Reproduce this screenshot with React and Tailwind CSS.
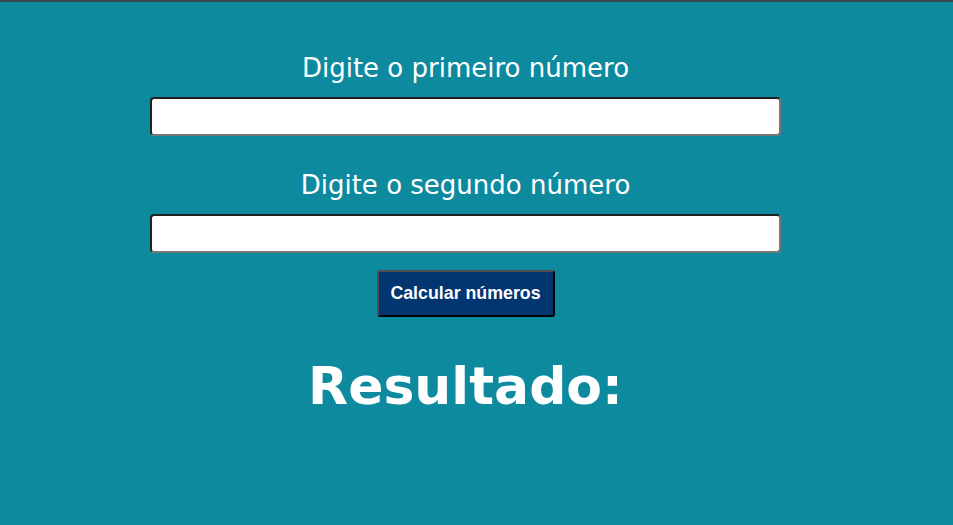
import React from 'react';

const labelCls = "block text-[26px] leading-[26px] text-white font-['DejaVu_Sans',Verdana,sans-serif]";
const inputCls = "mt-4 w-[631px] h-[39px] bg-white rounded border-2 border-t-[#222222] border-l-[#222222] border-r-[#777777] border-b-[#777777] outline-none";

export default function App() {
  return (
    <div className="min-h-[525px] w-full bg-[#0e8a9f] border-t-2 border-[#3a4a50] flex flex-col items-center pt-[53px] pr-[22px]">
      {/* Primeiro número */}
      <label htmlFor="n1" className={labelCls}>
        Digite o primeiro número
      </label>
      <input id="n1" type="text" className={inputCls} />

      {/* Segundo número */}
      <label htmlFor="n2" className={labelCls + " mt-9"}>
        Digite o segundo número
      </label>
      <input id="n2" type="text" className={inputCls} />

      <button
        type="button"
        className="mt-[17px] w-[178px] h-[47px] bg-[#033571] text-white font-bold text-[17.8px] rounded-[3px] border-2 border-t-[#4d4d4d] border-l-[#4d4d4d] border-r-black border-b-black font-['Liberation_Sans',Arial,sans-serif]"
      >
        Calcular números
      </button>

      <h1 className="mt-[43px] text-[52px] leading-[52px] font-bold text-white font-['DejaVu_Sans',Verdana,sans-serif]">
        Resultado:
      </h1>
    </div>
  );
}
